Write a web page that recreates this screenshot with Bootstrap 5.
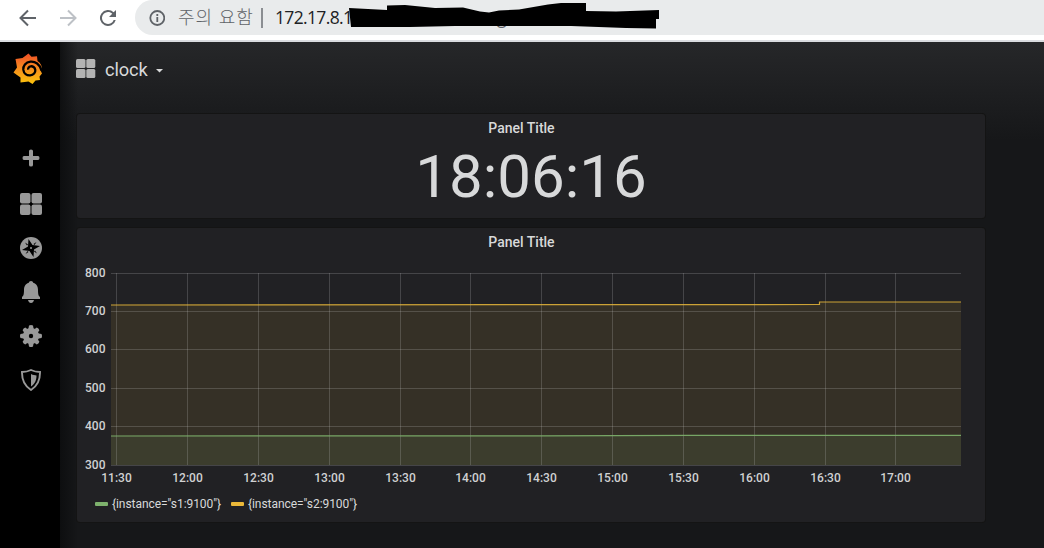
<!DOCTYPE html>
<html lang="ko">
<head>
<meta charset="utf-8">
<meta name="viewport" content="width=device-width, initial-scale=1">
<title>clock - Grafana</title>
<link href="https://cdn.jsdelivr.net/npm/bootstrap@5.3.0/dist/css/bootstrap.min.css" rel="stylesheet">
<style>
  body { font-family: Roboto, "Noto Sans CJK KR", sans-serif; height: 548px; background: #161719; color: #d8d9da; overflow: hidden; }
  svg { display: block; flex: none; }
  .browser-bar { height: 42px; padding-bottom: 5px; background: #fff; border-bottom: 2px solid #dadce0; gap: 16px; padding-left: 16px; }
  .address { height: 35px; margin-left: -1px; padding-left: 14px; background: #e9ebec; border-radius: 18px 0 0 18px; color: #5f6368; }
  .warn { font: 18px/33px "Noto Sans CJK KR", sans-serif; font-weight: 300; margin-left: 13px; width: 75px; letter-spacing: .9px; padding-bottom: 2px; }
  .url { font: 17.5px/35px "Open Sans", sans-serif; color: #202124; letter-spacing: -.65px; margin-left: 12px; }
  .redact { left: 213px; top: 2px; }
  .side { width: 60px; background: #000; padding-top: 11px; }
  .side-menu { padding: 51px 0 0 2px; }
  .side-item { height: 44px; }
  .side-item:first-child { height: 46px; padding-bottom: 2px; }
  .board { background: linear-gradient(90deg, #0b0c0dcc, #16171900 18px), linear-gradient(#262729, #161719 98px); padding: 0 17px 0 16px; }
  .page-title { height: 71px; padding-bottom: 18px; gap: 9px; font-size: 18.300px; letter-spacing: -.15px; }
  .page-title span { padding-top: 2px; }
  .page-title .caret { margin: 5px 0 0 -1px; }
  .panel { width: 908px; margin-left: 1px; background: #212124; border-radius: 3px; box-shadow: 0 0 0 1px #141414; }
  .panel-head { font-size: 14px; line-height: 28px; font-weight: 500; padding-right: 19px; }
  .clock-panel { height: 104px; margin-top: 1px; }
  .clock-value { font-size: 60px; line-height: 69px; }
  .graph-panel { height: 294px; margin-top: 10px; }
  .legend-row { font-size: 12px; line-height: 18px; padding: 1px 0 0 18px; gap: 10px; letter-spacing: -.06px; }
  .swatch { width: 13px; height: 4px; border-radius: 1px; }
</style>
</head>
<body class="d-flex flex-column">
<header class="browser-bar d-flex align-items-center">
  <svg width="24" height="24" viewBox="0 0 24 24" fill="none" stroke="#5f6368" stroke-width="2"><path d="M20 12H5M12 4.500 4.500 12l7.500 7.500"/></svg>
  <svg width="24" height="24" viewBox="0 0 24 24" fill="none" stroke="#bdc1c6" stroke-width="2"><path d="M4 12h15M12 4.500 19.500 12 12 19.500"/></svg>
  <svg width="24" height="24" viewBox="0 0 24 24"><path fill="#5f6368" d="M17.650 6.350A8 8 0 1 0 19.730 14h-2.080A6 6 0 1 1 12 6c1.660 0 3.140.69 4.220 1.780L13 11h7V4z"/></svg>
  <div class="address position-relative flex-grow-1 d-flex align-items-center">
    <svg width="16" height="16" viewBox="0 0 16 16"><circle cx="8.300" cy="8" r="7" fill="none" stroke="#5f6368" stroke-width="1.800"/><path d="M8.300 7v5M8.300 4v2" stroke="#5f6368" stroke-width="1.800"/></svg>
    <span class="warn text-nowrap">주의 요함</span>
    <svg class="ms-2" width="2" height="20"><path d="M1 0v20" stroke="#8b8e92" stroke-width="2"/></svg>
    <span class="url">172.17.8.1</span>
    <svg class="redact position-absolute" width="312" height="28" viewBox="348 2 312 28"><text x="497" y="24" font-family="Open Sans" font-size="17.500" fill="#5f6368">g</text><path d="M349 8 387 10V5.500L405 5l30 3 28-.5 17 4 9 1 10-2 20-1 29-5 13-1.500h25v8l30 .5 43-1.500v9h-3v9.500l-30-.5-55-2H455l-45 1h-59z"/></svg>
  </div>
</header>
<div class="d-flex flex-grow-1">
  <nav class="side d-flex flex-column align-items-center">
    <svg class="me-1" width="30" height="32" viewBox="0 0 30 32"><defs><linearGradient id="flame" x1="0" y1="0" x2="0" y2="1"><stop stop-color="#ef4f28"/><stop offset=".4" stop-color="#f58220"/><stop offset="1" stop-color="#fcc40c"/></linearGradient></defs>
      <path fill="url(#flame)" d="M15.500 .5 18.500 3.800 24 3.200 24.500 8C27.500 10 29 12.500 28.800 15.500L27 16.500 29 20.500 26.500 23.500 27 27 22.500 27.500 19.500 31 15.500 28.500 7.500 29.500 7.500 24.500 .5 19.500 4 14.500 2.500 6 9.500 5z"/>
      <path fill="none" stroke="#000" stroke-width="2.300" d="M28.500 17.500C27 11 22 8.200 17.500 8.700 12.500 9.200 10 13 10.300 16.700c.4 3.700 3.500 5.900 6.900 5.700 3.400-.3 5.400-2.800 5.100-5.500-.4-2.600-2.500-3.900-4.600-3.600-2 .3-2.900 2-2.400 3.400"/></svg>
    <div class="side-menu d-flex flex-column align-items-center">
      <div class="side-item d-flex align-items-center"><svg width="18" height="18" viewBox="0 0 18 18"><path d="M9 .5q2 0 2 1.500v5h5q1.500 0 1.500 2t-1.500 2h-5v5q0 1.500-2 1.500T7 16v-5H2Q.5 11 .5 9T2 7h5V2Q7 .5 9 .5z" fill="#999"/></svg></div>
      <div class="side-item d-flex align-items-center"><svg width="22" height="22" viewBox="0 0 22 22" fill="#999"><rect width="10.500" height="10.500" rx="2"/><rect x="11.500" width="10.500" height="10.500" rx="2"/><rect y="11.500" width="10.500" height="10.500" rx="2"/><rect x="11.500" y="11.500" width="10.500" height="10.500" rx="2"/></svg></div>
      <div class="side-item d-flex align-items-center"><svg width="22" height="22" viewBox="0 0 22 22"><circle cx="11" cy="11" r="11" fill="#999"/><path d="M8.500 2 12.500 8 20 9 14 12.500 13.500 20 9.500 14 2 13 8 9.500z"/><path d="M5 5.500 8 7.500 7 8.500zM16.500 5 14.500 8 13.500 7zM17 16.500 14 14.500 15 13.500zM5.500 17 7.500 14 8.500 15z"/><circle cx="11" cy="11" r="1" fill="#999"/></svg></div>
      <div class="side-item d-flex align-items-center"><svg width="18" height="22" viewBox="0 0 18 22"><path fill="#999" d="M9 0c1.200 0 2 .8 2.200 1.700C15 3 16 6 16 9c0 5 .7 6 2 7v2H0v-2c1.300-1 2-2 2-7 0-3 1-6 4.800-7.300C7 .8 7.800 0 9 0zM6 19h6c-.5 2-1.500 3-3 3s-2.500-1-3-3z"/></svg></div>
      <div class="side-item d-flex align-items-center"><svg width="22" height="22" viewBox="-11 -11 22 22"><g fill="#999"><circle r="8"/><g id="teeth"><path id="tooth" d="M-2-10.500Q0-11.500 2-10.500L3-5H-3zM-2 10.500Q0 11.500 2 10.500L3 5H-3z"/><use href="#tooth" transform="rotate(90)"/></g><use href="#teeth" transform="rotate(45) scale(.95)"/></g><circle r="2.200"/></svg></div>
      <div class="side-item d-flex align-items-center"><svg width="20" height="22" viewBox="0 0 20 22"><path d="M10 1c3 1.500 6 2 9 2 .2 8-2.500 14-9 18C3.500 17 .8 11 1 3c3 0 6-.5 9-2z" fill="none" stroke="#999" stroke-width="1.900"/><path fill="#999" d="M10 5c2 1 4 1.400 5.500 1.400C15.500 11 14 14.500 10 17.500z"/></svg></div>
    </div>
  </nav>
  <main class="board flex-grow-1">
    <div class="page-title d-flex align-items-center">
      <svg width="20" height="19" viewBox="0 0 20 19" fill="#b3b3b3"><rect width="9.500" height="9" rx="1.500"/><rect x="10.300" width="9" height="9" rx="1.500"/><rect y="10" width="9.500" height="9" rx="1.500"/><rect x="10.300" y="10" width="9" height="9" rx="1.500"/></svg>
      <span>clock</span>
      <svg width="7" height="4" viewBox="0 0 7 4" class="caret"><path fill="#d8d9da" d="M0 0h7L3.500 3.500z"/></svg>
    </div>
    <section class="panel clock-panel text-center">
      <div class="panel-head">Panel Title</div>
      <div class="clock-value">18:06:16</div>
    </section>
    <section class="panel graph-panel">
      <div class="panel-head text-center">Panel Title</div>
      <svg id="chart" width="908" height="238" viewBox="77 256 908 238" font-family="Roboto, sans-serif" font-size="12" font-weight="500" fill="#d0d1d2"></svg>
      <div class="legend-row d-flex">
        <span class="d-flex align-items-center gap-1"><i class="swatch" style="background:#7eb26d"></i>{instance="s1:9100"}</span>
        <span class="d-flex align-items-center gap-1"><i class="swatch" style="background:#eab839"></i>{instance="s2:9100"}</span>
      </div>
    </section>
  </main>
</div>
<script src="https://cdn.jsdelivr.net/npm/bootstrap@5.3.0/dist/js/bootstrap.bundle.min.js"></script>
<script>
  const rows = [[800, 273.5], [700, 311.5], [600, 349.5], [500, 388.5], [400, 426.5], [300, 465.5]];
  const times = ['11:30', '12:00', '12:30', '13:00', '13:30', '14:00', '14:30', '15:00', '15:30', '16:00', '16:30', '17:00'];
  const columns = [116.5, 187.5, 258.5, 329.5, 400.5, 470.5, 541.5, 612.5, 683.5, 754.5, 825.5, 895.5];
  let out = `<path d="M111 305H819.500V302H961V465H111Z" fill="#eab839" fill-opacity=".1"/>
    <path d="M111 436H612V435.300H961V465H111Z" fill="#7eb26d" fill-opacity=".1"/>`;
  rows.forEach(([value, y]) => {
    out += `<path d="M111 ${y}H961" stroke="#c8c8c8" stroke-opacity=".22"/><text x="105.500" y="${y + 3.5}" text-anchor="end">${value}</text>`;
  });
  times.forEach((time, i) => {
    out += `<path d="M${columns[i]} 273V465" stroke="#c8c8c8" stroke-opacity=".22"/><text x="${columns[i]}" y="482" text-anchor="middle">${time}</text>`;
  });
  out += `<path d="M111 305 819.500 304.500V302H961" fill="none" stroke="#eab839" stroke-opacity=".85" stroke-width="1.200"/>
    <path d="M111 436 540 435.900 690 435.400H961" fill="none" stroke="#7eb26d" stroke-opacity=".9" stroke-width="1.200"/>`;
  document.getElementById('chart').innerHTML = out;
</script>
</body>
</html>
